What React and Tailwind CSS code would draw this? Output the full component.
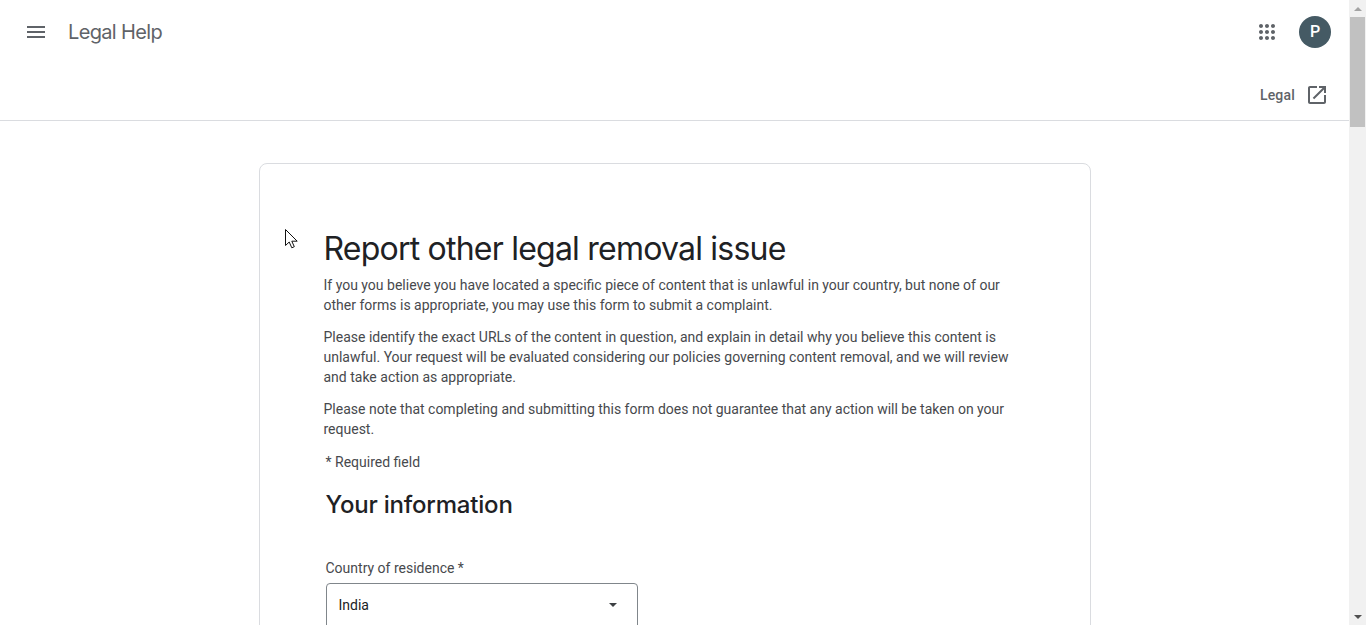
import React from 'react';

const body_font = "font-['Roboto',sans-serif]";

const MenuIcon = () => (
	<svg width="24" height="24" viewBox="0 0 24 24" fill="#5f6368">
		<path d="M3 18h18v-2H3v2zm0-5h18v-2H3v2zm0-7v2h18V6H3z" />
	</svg>
);

const AppsIcon = () => (
	<svg width="24" height="24" viewBox="0 0 24 24" fill="#5f6368">
		<path d="M6 8c1.1 0 2-.9 2-2s-.9-2-2-2-2 .9-2 2 .9 2 2 2zm6 12c1.1 0 2-.9 2-2s-.9-2-2-2-2 .9-2 2 .9 2 2 2zm-6 0c1.1 0 2-.9 2-2s-.9-2-2-2-2 .9-2 2 .9 2 2 2zm0-6c1.1 0 2-.9 2-2s-.9-2-2-2-2 .9-2 2 .9 2 2 2zm6 0c1.1 0 2-.9 2-2s-.9-2-2-2-2 .9-2 2 .9 2 2 2zm4-8c0 1.1.9 2 2 2s2-.9 2-2-.9-2-2-2-2 .9-2 2zm-4 2c1.1 0 2-.9 2-2s-.9-2-2-2-2 .9-2 2 .9 2 2 2zm6 6c1.1 0 2-.9 2-2s-.9-2-2-2-2 .9-2 2 .9 2 2 2zm0 6c1.1 0 2-.9 2-2s-.9-2-2-2-2 .9-2 2 .9 2 2 2z" />
	</svg>
);

const OpenInNewIcon = () => (
	<svg width="24" height="24" viewBox="0 0 24 24" fill="#5f6368">
		<path d="M19 19H5V5h7V3H5c-1.11 0-2 .9-2 2v14c0 1.1.89 2 2 2h14c1.1 0 2-.9 2-2v-7h-2v7zM14 3v2h3.59l-9.83 9.83 1.41 1.41L19 6.41V10h2V3h-7z" />
	</svg>
);

const Cursor = () => (
	<svg className="absolute left-[285px] top-[229px]" width="14" height="20" viewBox="0 0 14 20" fill="#fff" stroke="#111" strokeWidth="1">
		<path d="M0.5 0.5V16.5L4.2 13L6.8 18.8L9.3 17.7L6.8 12.2H12.2Z" />
	</svg>
);

const Header = () => (
	<header className="border-b border-[#dadce0] h-[121px] shrink-0">
		<div className="flex items-center h-16 pl-6 pr-[18px]">
			<MenuIcon />
			<span className="ml-5 text-[20px] leading-7 text-[#5f6368] font-['Inter',sans-serif] tracking-[-0.65px]">Legal Help</span>
			<div className="ml-auto flex items-center gap-5">
				<AppsIcon />
				<div className="w-8 h-8 rounded-full bg-[#455a64] text-white flex items-center justify-center text-[16px] font-medium">P</div>
			</div>
		</div>
		<div className="flex items-center justify-end h-[62px] pr-5">
			<span className="text-[14px] font-medium text-[#5f6368] mr-[10px] tracking-[0.2px]">Legal</span>
			<OpenInNewIcon />
		</div>
	</header>
);

const Scrollbar = () => (
	<div className="w-[17px] shrink-0 bg-[#f1f1f1] flex flex-col">
		<div className="h-[17px] flex items-center justify-center">
			<div className="w-0 h-0 border-x-[4px] border-x-transparent border-b-[4px] border-b-[#a3a3a3]" />
		</div>
		<div className="h-[110px] mx-[1px] bg-[#c1c1c1]" />
		<div className="mt-auto h-[17px] flex items-center justify-center">
			<div className="w-0 h-0 border-x-[4px] border-x-transparent border-t-[4px] border-t-[#505050]" />
		</div>
	</div>
);

const App = () => {
	return (
		<div className={`relative flex h-[625px] overflow-hidden bg-white ${body_font}`}>
			<div className="flex-1 flex flex-col min-w-0">
				<Header />
				<main className="pt-[42px] pl-[259px]">
					<div className="w-[832px] h-[600px] border border-[#dadce0] rounded-lg pt-[65px] pl-[63.5px]">
						<div className="w-[700px] text-[14px] leading-5 text-[#47494d]">
							<h1 className="text-[32px] leading-10 text-[#202124] font-['Inter',sans-serif] tracking-[-0.78px] mb-[6px]">Report other legal removal issue</h1>
							<p className="mb-3">If you you believe you have located a specific piece of content that is unlawful in your country, but none of our other forms is appropriate, you may use this form to submit a complaint.</p>
							<p className="mb-3">Please identify the exact URLs of the content in question, and explain in detail why you believe this content is unlawful. Your request will be evaluated considering our policies governing content removal, and we will review and take action as appropriate.</p>
							<p>Please note that completing and submitting this form does not guarantee that any action will be taken on your request.</p>
							<div className="ml-[2px] mt-[13px]">* Required field</div>
							<h2 className="ml-[2px] mt-[17px] text-[24px] leading-8 text-[#202124] font-medium font-['Inter',sans-serif] tracking-[-0.2px]">Your information</h2>
							<div className="ml-[2px] mt-[37px]">Country of residence *</div>
							<div className="ml-[2px] mt-[5px] w-[312px] h-14 border border-[#80868b] rounded flex items-start justify-between pl-3 pr-5 pt-[11px] text-[#202124]">
								<span>India</span>
								<div className="mt-2 w-0 h-0 border-x-[4px] border-x-transparent border-t-[4px] border-t-[#3c4043]" />
							</div>
						</div>
					</div>
				</main>
			</div>
			<Scrollbar />
			<Cursor />
		</div>
	);
};

export default App;
